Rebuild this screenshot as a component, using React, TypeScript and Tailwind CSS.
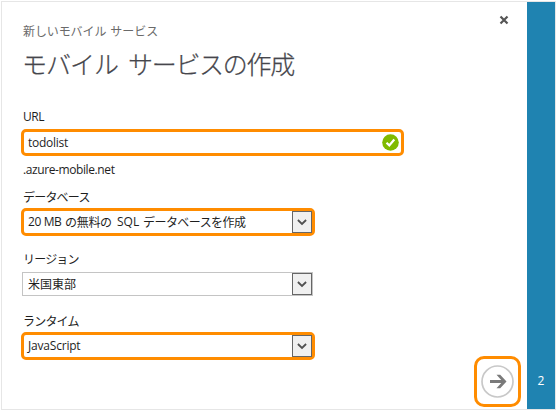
import { ReactNode } from "react";

const latin = "font-['Open_Sans','Noto_Sans_CJK_JP',sans-serif]";
const kana = "font-['Noto_Sans_CJK_JP',sans-serif]";

function Chevron() {
  return (
    <span className="flex h-[22px] w-[20px] shrink-0 items-center justify-center border border-[#666] bg-[#f0f0f0]">
      <svg width="10" height="8" viewBox="0 0 10 8" fill="none" stroke="#505050" strokeWidth="1.8">
        <path d="M0.9 2 5 5.9 9.1 2" />
      </svg>
    </span>
  );
}

function Label({ children, className = "" }: { children: ReactNode; className?: string }) {
  return <div className={`h-[18px] whitespace-nowrap pl-[2px] text-[12px] leading-[18px] ${className}`}>{children}</div>;
}

function HighlightSelect({ children }: { children: ReactNode }) {
  return (
    <div className="flex h-[28px] w-[294px] items-center justify-between rounded-[5px] border-[3px] border-[#ff8c00] bg-white pl-[4px] text-[12px] leading-[18px]">
      {children}
      <Chevron />
    </div>
  );
}

export default function App() {
  return (
    <div className={`h-[412px] w-[557px] bg-white p-px text-[#1e1e1e] ${latin}`}>
      <div className="flex h-[409px] w-[555px] border border-[#e6e6e6]">
        <main className="flex w-[525px] flex-col pl-[19px]">
          <div className="flex h-[42px] justify-between">
            <div className={`mt-[20px] flex h-[18px] gap-[4px] whitespace-nowrap pl-[2px] text-[12px] leading-[18px] text-[#6a6a6a] ${kana}`}>
              <span className="tracking-[-0.1px]">新しいモバイル</span>
              <span className="tracking-[0px]">サービス</span>
            </div>
            <svg className="mr-[18px] mt-[13px]" width="10" height="10" viewBox="0 0 10 10" stroke="#555" strokeWidth="2.2">
              <path d="M1.5 1.5 8.5 8.5M8.5 1.5 1.5 8.5" />
            </svg>
          </div>
          <h1 className={`flex h-[36px] gap-[10px] whitespace-nowrap pl-[1px] text-[25px] font-light leading-[39px] text-[#46464c] [-webkit-text-stroke:0.25px_#46464c] ${kana}`}>
            <span className="tracking-[-1px]">モバイル</span>
            <span className="tracking-[-1.3px]">サービスの作成</span>
          </h1>
          <Label className="mt-[28px]"><span className="tracking-[-0.5px]">URL</span></Label>
          <div className="mt-[3px] flex h-[27px] w-[383px] items-center justify-between rounded-[5px] border-[3px] border-[#ff8c00] bg-white pl-[4px] pr-[2px] text-[12px] leading-[18px]">
            <span className="pt-[1px] tracking-[-0.25px]">todolist</span>
            <svg width="17" height="17" viewBox="0 0 17 17" fill="none">
              <circle cx="8.5" cy="8.5" r="8.3" fill="#7fba00" />
              <path d="M4.5 8.8 7.3 11.4 12.3 5.5" stroke="white" strokeWidth="2.2" />
            </svg>
          </div>
          <Label className="mt-[5px]"><span className="tracking-[-0.4px]">.azure-mobile.net</span></Label>
          <Label className={`mt-[9px] ${kana}`}><span className="tracking-[-0.8px]">データベース</span></Label>
          <div className="mt-[2px]">
            <HighlightSelect>
              <span className="flex whitespace-nowrap">
                <span className="w-[37px] tracking-[-0.4px]">20 MB</span>
                <span className={`w-[52px] tracking-[-0.3px] ${kana}`}>の無料の</span>
                <span className="w-[26px] tracking-[0px]">SQL</span>
                <span className={`tracking-[-0.55px] ${kana}`}>データベースを作成</span>
              </span>
            </HighlightSelect>
          </div>
          <Label className={`mt-[14px] ${kana}`}><span className="tracking-[-0.8px]">リージョン</span></Label>
          <div className={`ml-[1px] mt-[4px] flex h-[24px] w-[291px] items-center justify-between border border-[#c4c4c4] pl-[5px] text-[12px] leading-[18px] ${kana}`}>
            <span>米国東部</span>
            <Chevron />
          </div>
          <Label className={`mt-[16px] ${kana}`}><span className="tracking-[-0.8px]">ランタイム</span></Label>
          <div className="mt-[2px] flex">
            <HighlightSelect><span className="tracking-[-0.2px]">JavaScript</span></HighlightSelect>
          </div>
          <div className="-mt-[4px] flex justify-end pr-[6px]">
            <button className="flex h-[51px] w-[47px] items-center justify-center rounded-[10px] border-[3px] border-[#ff8c00]">
              <svg width="33" height="33" viewBox="0 0 33 33" fill="none">
                <circle cx="16.5" cy="16.5" r="15.5" stroke="#c8c8c8" strokeWidth="1.7" />
                <path d="M9 16.5H23" stroke="#7a7a7a" strokeWidth="3" />
                <path d="M15.5 9.8H19.2L25.5 16.5L19.2 23.2H15.5L21.6 16.5Z" fill="#7a7a7a" />
              </svg>
            </button>
          </div>
        </main>
        <aside className="flex w-[28px] items-end justify-center bg-[#1f83b1] pb-[19px] text-[12px] leading-[18px] text-white">2</aside>
      </div>
    </div>
  );
}
